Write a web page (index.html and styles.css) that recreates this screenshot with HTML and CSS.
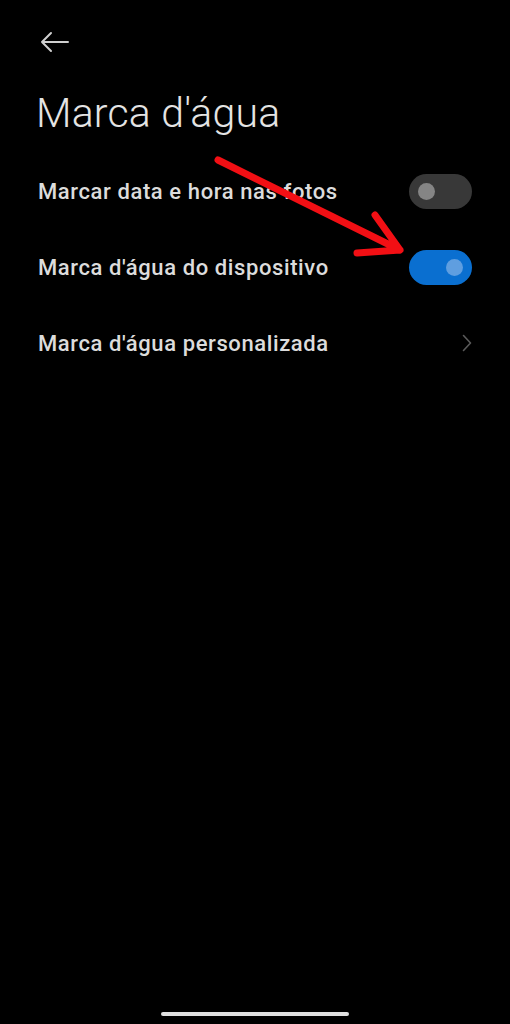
FILE: index.html
```html
<!DOCTYPE html>
<html lang="pt">
<head>
<meta charset="utf-8">
<link rel="stylesheet" href="styles.css">
</head>
<body>
<div class="screen">
  <div class="topbar">
    <svg class="back" width="30" height="22" viewBox="0 0 30 22">
      <path d="M2 11 H28 M11 2 L2 11 L11 20" fill="none" stroke="#cfcfcf" stroke-width="2" stroke-linecap="round" stroke-linejoin="round"/>
    </svg>
  </div>
  <h1 class="title">Marca d'água</h1>
  <div class="list">
    <div class="row">
      <span class="label">Marcar data e hora nas fotos</span>
      <span class="switch off"><span class="knob"></span></span>
    </div>
    <div class="row">
      <span class="label">Marca d'água do dispositivo</span>
      <span class="switch on"><span class="knob"></span></span>
    </div>
    <div class="row">
      <span class="label">Marca d'água personalizada</span>
      <svg class="chev" width="10" height="18" viewBox="0 0 10 18">
        <path d="M1.5 1.5 L8.5 9 L1.5 16.5" fill="none" stroke="#5a5a5a" stroke-width="1.6" stroke-linecap="round" stroke-linejoin="round"/>
      </svg>
    </div>
  </div>
  <div class="home"></div>
  <svg class="annot" width="510" height="1024" viewBox="0 0 510 1024">
    <path d="M218 160 L400 250 M375 215 L400 250 L357 253" fill="none" stroke="#f20f14" stroke-width="7" stroke-linecap="round" stroke-linejoin="round"/>
  </svg>
</div>
</body>
</html>
```
FILE: styles.css
```css
* { box-sizing: border-box; }
html, body { margin: 0; padding: 0; background: #000; }
body { font-family: Roboto, "Noto Sans", sans-serif; color: #dedede; }
.screen {
  position: relative;
  width: 510px;
  height: 1024px;
  display: flex;
  flex-direction: column;
  overflow: hidden;
}
.topbar {
  height: 89px;
  padding: 31px 0 0 40px;
}
.back { display: block; }
.title {
  margin: 0;
  padding-left: 36px;
  font-size: 41px;
  line-height: 48px;
  font-weight: 300;
  letter-spacing: 0.2px;
  color: #e4e4e4;
}
.list {
  margin-top: 16px;
  display: flex;
  flex-direction: column;
}
.row {
  height: 76px;
  padding: 0 38px 0 38px;
  display: flex;
  align-items: center;
  justify-content: space-between;
}
.label {
  font-size: 22px;
  font-weight: 500;
  letter-spacing: 0.6px;
  color: #dcdcdc;
}
.switch {
  width: 63px;
  height: 35px;
  border-radius: 18px;
  display: flex;
  align-items: center;
  padding: 0 9px;
}
.switch.off { background: #383838; justify-content: flex-start; }
.switch.on { background: #0a6fd0; justify-content: flex-end; }
.knob {
  width: 17px;
  height: 17px;
  border-radius: 50%;
}
.switch.off .knob { background: #858585; }
.switch.on .knob { background: #5f9ee0; }
.chev { display: block; }
.home {
  margin-top: auto;
  margin-bottom: 8px;
  align-self: center;
  width: 188px;
  height: 4px;
  border-radius: 2px;
  background: #e0e0e0;
}
.annot {
  position: absolute;
  left: 0;
  top: 0;
  pointer-events: none;
}
```
